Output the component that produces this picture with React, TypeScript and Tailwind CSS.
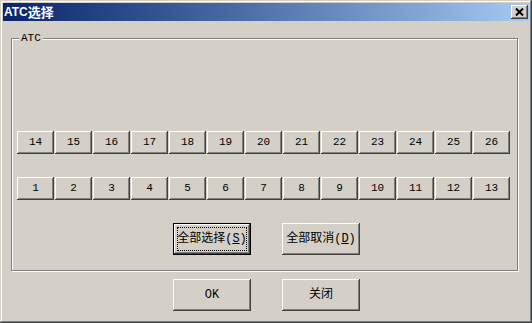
const top = [14, 15, 16, 17, 18, 19, 20, 21, 22, 23, 24, 25, 26];
const bottom = [1, 2, 3, 4, 5, 6, 7, 8, 9, 10, 11, 12, 13];

const bevel =
  "bg-[#d4d0c8] shadow-[inset_-1px_-1px_0_#404040,inset_1px_1px_0_#ffffff,inset_-2px_-2px_0_#808080,inset_2px_2px_0_#d4d0c8]";
const mono = "font-['Liberation_Mono','Noto_Sans_CJK_SC',monospace] text-black";

function NumButton({ n }: { n: number }) {
  return (
    <div className={`${bevel} ${mono} w-[37px] h-[23px] flex items-center justify-center text-[11px] leading-none`}>
      {n}
    </div>
  );
}

function Button({ children, def }: { children: React.ReactNode; def?: boolean }) {
  if (def) {
    return (
      <div className="w-[78px] h-[32px] border border-black">
        <div className={`${bevel} ${mono} relative w-full h-full flex items-center justify-center text-[12px] leading-none`}>
          <div className="absolute inset-[3px] border border-dotted border-black" />
          {children}
        </div>
      </div>
    );
  }
  return (
    <div className={`${bevel} ${mono} w-[78px] h-[32px] flex items-center justify-center text-[12px] leading-none`}>
      {children}
    </div>
  );
}

export default function App() {
  return (
    <div className="w-[532px] h-[323px] bg-[#d4d0c8] shadow-[inset_-1px_-1px_0_#404040,inset_1px_1px_0_#d4d0c8,inset_-2px_-2px_0_#808080,inset_2px_2px_0_#ffffff] p-[3px] flex flex-col">
      <div className="h-[18px] bg-gradient-to-r from-[#0a246a] to-[#a6caf0] flex items-center justify-between pl-[1px] pr-[1px]">
        <div className="text-white font-bold font-['Liberation_Sans','Noto_Sans_CJK_SC',sans-serif] leading-none flex items-center">
          <span className="text-[12px]">ATC</span>
          <span className="text-[13px]">选择</span>
        </div>
        <div className={`${bevel} w-[17px] h-[14px] flex items-center justify-center pb-[1px]`}>
          <svg width="9" height="8" viewBox="0 0 9 8">
            <path d="M1 0.5L8 7.5M8 0.5L1 7.5" stroke="#000" strokeWidth="2" />
          </svg>
        </div>
      </div>

      <div className="relative ml-[8px] mt-[17px] w-[507px] h-[233px] border border-[#808080] shadow-[1px_1px_0_#ffffff,inset_1px_1px_0_#ffffff]">
        <span className={`absolute left-[7px] top-[-8px] px-[2px] bg-[#d4d0c8] ${mono} text-[11px] leading-[14px]`}>ATC</span>
        <div className="pl-[5px] pt-[92px] flex flex-col">
          <div className="flex gap-[1px]">
            {top.map((n) => (
              <NumButton key={n} n={n} />
            ))}
          </div>
          <div className="flex gap-[1px] mt-[23px]">
            {bottom.map((n) => (
              <NumButton key={n} n={n} />
            ))}
          </div>
          <div className="flex gap-[31px] mt-[23px] pl-[156px]">
            <Button def>
              全部选择(<span className="underline">S</span>)
            </Button>
            <Button>
              全部取消(<span className="underline">D</span>)
            </Button>
          </div>
        </div>
      </div>

      <div className="flex gap-[31px] mt-[8px] pl-[170px]">
        <Button>OK</Button>
        <Button>关闭</Button>
      </div>
    </div>
  );
}
